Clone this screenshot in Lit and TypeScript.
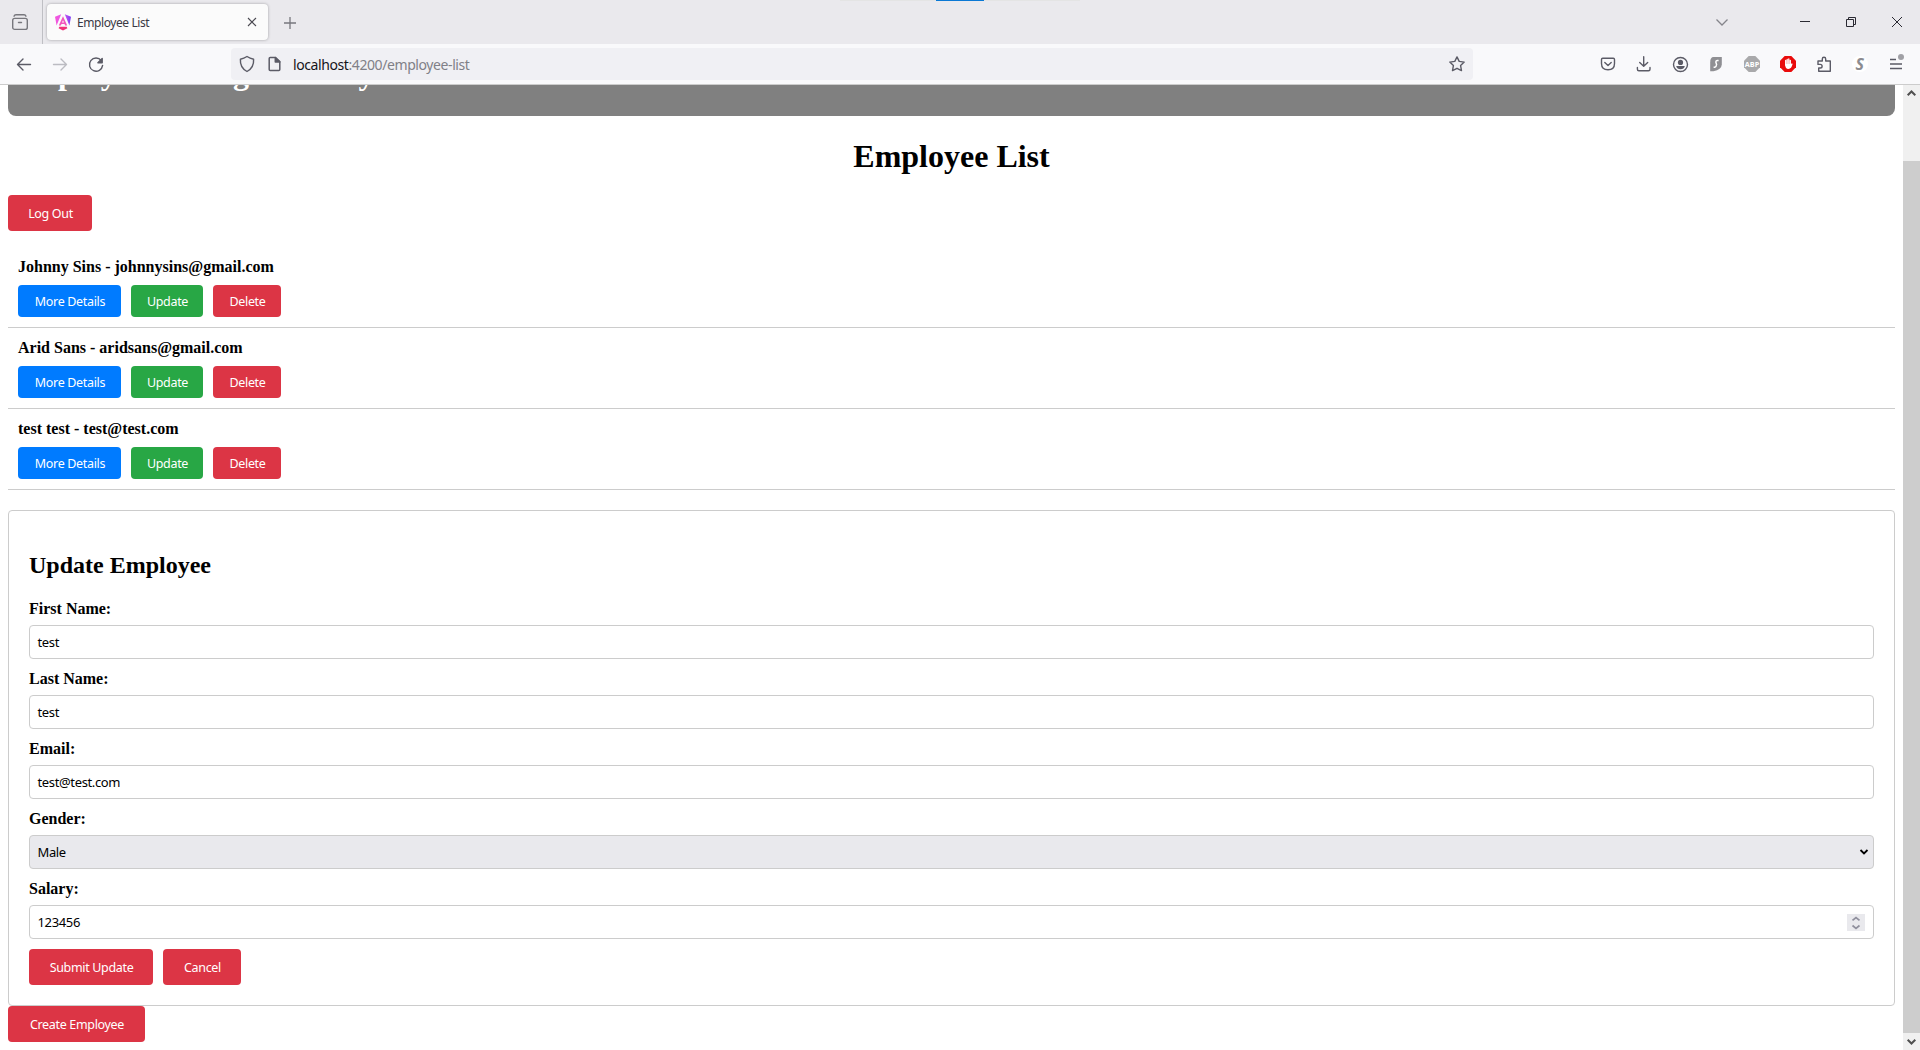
import { LitElement, html, css, svg } from "lit";
import { customElement, property } from "lit/decorators.js";

const base = css`
  * { box-sizing: border-box; }
  svg { display: block; flex: none; overflow: visible; }
`;

@customElement("browser-bar")
export class BrowserBar extends LitElement {
  static styles = [base, css`
    :host { display: block; flex: none; height: 85px; font-family: "Noto Sans", "Open Sans", sans-serif; background: #f9f9fb; border-bottom: 1px solid #cccccc; position: relative; }
    .strip { display: flex; height: 44px; background: #eae9ed; align-items: center; }
    .view { width: 43px; height: 44px; border-right: 1px solid #bfbfc4; display: flex; align-items: center; padding-left: 12px; }
    .tab { margin-left: 4px; width: 221px; height: 36px; background: #fbfbfb; border-radius: 4px; box-shadow: 0 0 3px rgba(0,0,0,.32); display: flex; align-items: center; padding: 0 12px 0 8px; }
    .title { flex: 1; margin-left: 6px; padding-top: 1px; font-size: 12px; color: #3a3944; letter-spacing: -0.42px; white-space: nowrap; }
    .plus { margin-left: 16px; margin-top: 1px; }
    .win { margin-left: auto; display: flex; align-items: center; padding-right: 18px; }
    .min { margin-left: 72px; }
    .gap { margin-left: 36px; }
    .tools { display: flex; height: 40px; align-items: center; }
    .nav { width: 231px; display: flex; gap: 20px; padding-left: 16px; align-items: center; }
    .url { width: 1242px; height: 32px; border-radius: 4px; background: #f0f0f4; display: flex; align-items: center; padding: 0 8px; }
    .addr { margin-left: 10px; padding-top: 1px; flex: 1; display: flex; font-size: 14px; color: #808087; letter-spacing: -0.41px; white-space: nowrap; }
    .host { color: #15141a; }
    .page { margin-left: 12px; }
    .ext { margin-left: auto; display: flex; gap: 20px; padding-right: 16px; }
    .accent { position: absolute; top: 0; left: 936px; width: 48px; height: 1px; background: #0a78d4; }
    .edge { position: absolute; top: 0; left: 840px; width: 240px; height: 1px; background: #e4e4e4; }
    .abp { font: bold 7.5px "Open Sans", sans-serif; fill: #fff; }
    .ess { font: italic bold 16px "Open Sans", sans-serif; fill: #8c8c90; }
  `];

  icon(body: unknown, color = "#5b5b66") {
    return html`<svg width="16" height="16" viewBox="0 0 16 16" fill="none" stroke=${color} stroke-width="1.4" stroke-linecap="round" stroke-linejoin="round">${body}</svg>`;
  }

  render() {
    return html`
      <div class="strip">
        <div class="view">${this.icon(svg`<rect x=".7" y="4.4" width="14.6" height="11" rx="2"/><path d="M2 2.2Q2.5 .8 4 .8H12Q13.5 .8 14 2.2M6.500 8.500H9.500"/>`, "#77777d")}</div>
        <div class="tab">
          <svg width="16" height="17" viewBox="0 0 16 17">
            <defs><linearGradient id="g" x1="0" x2="1"><stop offset="0" stop-color="#f655d8"/><stop offset=".5" stop-color="#e05af0"/><stop offset="1" stop-color="#7a3df5"/></linearGradient></defs>
            <path fill="url(#g)" d="M0 2.800 6.200 .2 1.600 11.500ZM16 2.800 9.800 .2 14.400 11.500Z"/>
            <path fill="#f0307a" d="M4.300 12.700H11.700L12.400 14.200 8 16.600 3.600 14.200Z"/>
            <path fill="#f254bd" fill-rule="evenodd" d="M8 2.300 12.200 11.600H10.200L9.500 10H6.500L5.800 11.600H3.800ZM8 6.200 7 8.500H9Z"/>
          </svg>
          <span class="title">Employee List</span>
          <svg width="8" height="8" viewBox="0 0 8 8" stroke="#4b4a52" stroke-width="1.1"><path d="M0 0 8 8M8 0 0 8"/></svg>
        </div>
        <svg class="plus" width="12" height="12" viewBox="0 0 12 12" stroke="#77777d" stroke-width="1.3"><path d="M6 0V12M0 6H12"/></svg>
        <div class="win">
          <svg width="12" height="7" viewBox="0 0 12 7" fill="none" stroke="#85858b" stroke-width="1.3"><path d="M.5 .5 6 6 11.500 .5"/></svg>
          <svg class="min" width="10" height="10" viewBox="0 0 10 10"><path d="M0 4.500H10" stroke="#2b2a33"/></svg>
          <svg class="gap" width="10" height="10" viewBox="0 0 10 10" fill="none" stroke="#2b2a33"><path d="M.5 2.500H7.500V9.500H.5ZM2.500 2.500V.5H9.500V7.500H7.500"/></svg>
          <svg class="gap" width="10" height="10" viewBox="0 0 10 10" stroke="#2b2a33"><path d="M0 0 10 10M10 0 0 10"/></svg>
        </div>
      </div>
      <div class="tools">
        <div class="nav">
          ${this.icon(svg`<path d="M14.500 8.500H1.500M7 3 1.500 8.500 7 14"/>`)}
          ${this.icon(svg`<path d="M1.500 8.500H14.500M9 3 14.500 8.500 9 14"/>`, "#bcbcc2")}
          ${this.icon(svg`<path d="M13.300 4.600A6.600 6.600 0 1 0 14.600 9.400"/><path d="M14.200 2.400V6.700H9.900Z" fill="#5b5b66"/>`)}
        </div>
        <div class="url">
          ${this.icon(svg`<path d="M8 .5Q11 2.500 14.600 3.200Q15.200 11.500 8 15.500Q.8 11.500 1.400 3.200Q5 2.500 8 .5Z"/>`)}
          <svg class="page" width="16" height="16" viewBox="0 0 16 16" fill="none" stroke="#5b5b66" stroke-width="1.5" stroke-linejoin="round"><path d="M3.200 1.500H8.500L12.800 5.500V13.500Q12.800 14.500 11.800 14.500H3.200Q2.200 14.500 2.200 13.500V2.500Q2.200 1.500 3.200 1.500Z"/><path d="M8.300 1.500V6H12.800Z" fill="#5b5b66"/></svg>
          <div class="addr"><span class="host">localhost</span><span>:4200/employee-list</span></div>
          ${this.icon(svg`<path d="M8 .9 10.200 5.400 15.200 6.100 11.600 9.600 12.500 14.600 8 12.300 3.500 14.600 4.400 9.600 .8 6.100 5.800 5.400Z"/>`)}
        </div>
        <div class="ext">
          ${this.icon(svg`<path d="M2.700 2.200H13.300Q14.500 2.200 14.500 3.500V7.500Q14.500 13.800 8 13.800T1.500 7.500V3.500Q1.500 2.200 2.700 2.200ZM4.800 6.500 8 9.500 11.200 6.500"/>`)}
          ${this.icon(svg`<path d="M7.700 .8V10M3.700 6.500 7.700 10.300 11.700 6.500M1.400 11.500V13.200Q1.400 14.700 2.900 14.700H12.500Q14 14.700 14 13.200V11.500"/>`)}
          ${this.icon(svg`<circle cx="8.500" cy="8.500" r="7"/><circle cx="8.500" cy="6.400" r="2.600" fill="#5b5b66" stroke="none"/><path d="M4.200 10H12.800Q12 13.200 8.500 13.200T4.200 10Z" fill="#5b5b66" stroke="none"/>`)}
          <svg width="16" height="16" viewBox="0 0 16 16"><path d="M5.500 1H13.800V8.500Q13.500 13.500 5.500 15.200H2.200V6.500Q2.200 1 5.500 1Z" fill="#8f8f93"/><path d="M10.600 4.500H9.300Q8 4.500 7.800 6L8.600 8.500Q8.300 11 6.800 11.300H5.600" fill="none" stroke="#fff" stroke-width="1.5"/></svg>
          <svg width="16" height="16" viewBox="0 0 16 16"><path d="M4.700 0H11.300L16 4.700V11.300L11.300 16H4.700L0 11.300V4.700Z" fill="#a9a9ab"/><text class="abp" x=".8" y="10.800" textLength="14.400" lengthAdjust="spacingAndGlyphs">ABP</text></svg>
          <svg width="16" height="16" viewBox="0 0 16 16"><path d="M4.700 0H11.300L16 4.700V11.300L11.300 16H4.700L0 11.300V4.700Z" fill="#e90b0b"/><path d="M5.700 4.500V9M7.200 3.500V9M8.800 3V9M10.300 4.500V9" stroke="#fff" stroke-width="1.3" stroke-linecap="round"/><path d="M5.100 8H10.900L12 7.200 12.600 8Q11.500 12.800 8.500 13Q5 13 5.100 8Z" fill="#fff"/></svg>
          ${this.icon(svg`<path d="M2 6.800V5H6.300V3A1.700 1.700 0 0 1 9.700 3V5H14.300V15.200H2.700V12H4.300A1.800 1.800 0 0 0 4.300 8.400H2Z"/>`)}
          <svg width="16" height="16" viewBox="0 0 16 16"><circle cx="8" cy="8" r="8" fill="#fff"/><text class="ess" x="3.500" y="13.800">S</text></svg>
          <svg width="16" height="16" viewBox="0 0 16 16" stroke="#5b5b66" stroke-width="1.3"><path d="M2 3.500H8M2 8H14M2 12.500H14"/><circle cx="13" cy="1" r="3" fill="#a0a0a5" stroke="none"/></svg>
        </div>
      </div>
      <div class="edge"></div><div class="accent"></div>`;
  }
}

@customElement("ui-button")
export class UiButton extends LitElement {
  @property() kind = "";
  @property({ type: Number }) width = 80;
  static styles = [base, css`
    :host { display: block; flex: none; }
    .btn { display: flex; align-items: center; justify-content: center; height: 36px; border: 0; border-radius: 4px; padding: 0 0 0 1px; background: #dc3545; color: #fff; font: 12.5px "Noto Sans", "Open Sans", sans-serif; letter-spacing: -0.33px; white-space: nowrap; }
    .small { height: 32px; }
    .info { background: #007bff; }
    .ok { background: #28a745; }
  `];
  render() {
    return html`<button class="btn ${this.kind}" style="width:${this.width}px"><slot></slot></button>`;
  }
}

@customElement("app-root")
export class AppRoot extends LitElement {
  static styles = [base, css`
    :host { display: flex; flex-direction: column; width: 1920px; height: 1050px; overflow: hidden; background: #fff; color: #000; font-family: "Liberation Serif", "Times New Roman", serif; }
    .body { flex: 1; display: flex; min-height: 0; overflow: hidden; }
    main { flex: 1; min-width: 0; padding: 0 8px; }
    .head { height: 31px; background: #808080; border-radius: 0 0 8px 8px; overflow: hidden; display: flex; align-items: flex-end; color: #fff; }
    .brand { font-size: 32px; font-weight: bold; line-height: 37px; margin-bottom: 24px; margin-left: 2px; white-space: nowrap; }
    h1 { margin: 22px 0 20px; font-size: 32px; line-height: 37px; text-align: center; }
    .list { margin-top: 16px; }
    .item { height: 81px; padding: 11px 10px 10px; border-bottom: 1px solid #ccc; font-size: 16px; line-height: 18px; font-weight: bold; }
    .row { display: flex; gap: 10px; }
    .item .row { margin-top: 9px; }
    .card { margin-top: 20px; border: 1px solid #ccc; border-radius: 4px; padding: 20px; height: 496px; }
    h2 { margin: 21px 0 20px; font-size: 24px; line-height: 27px; }
    .label { display: block; height: 26px; padding-top: 1px; line-height: 18px; font-size: 16px; font-weight: bold; }
    .field { height: 34px; margin-bottom: 10px; border: 1px solid #ccc; border-radius: 4px; display: flex; align-items: center; justify-content: space-between; padding: 0 8px 0 7.5px; font: 13px "Noto Sans", "Open Sans", sans-serif; letter-spacing: -0.36px; }
    .select { background: #e9e9ed; padding-right: 5px; }
    .spin { width: 18px; height: 17px; background: #e9e9ed; }
    .scroll { width: 17px; background: #f0f0f0; display: flex; flex-direction: column; align-items: center; padding-top: 5px; }
    .thumb { width: 17px; height: 872px; background: #cdcdcd; margin-top: 65px; margin-bottom: 6px; }
  `];

  people = ["Johnny Sins - johnnysins@gmail.com", "Arid Sans - aridsans@gmail.com", "test test - test@test.com"];
  fields = [["First Name:", "test"], ["Last Name:", "test"], ["Email:", "test@test.com"], ["Gender:", "Male"], ["Salary:", "123456"]];

  control(label: string) {
    if (label === "Gender:") return html`<svg width="8" height="6" viewBox="0 0 8 6" fill="none" stroke="#000" stroke-width="1.8"><path d="M.5 1 4 4.500 7.500 1"/></svg>`;
    if (label === "Salary:") return html`<svg class="spin" width="18" height="17" viewBox="0 0 18 17" fill="none" stroke="#8f8f9d" stroke-width="1.7"><path d="M5.500 6.300 9 3.500 12.500 6.300M5.500 11.500 9 14.300 12.500 11.500"/></svg>`;
    return "";
  }

  render() {
    return html`
      <browser-bar></browser-bar>
      <div class="body">
        <main>
          <div class="head"><div class="brand">Employee Management System</div></div>
          <h1>Employee List</h1>
          <ui-button width="84">Log Out</ui-button>
          <div class="list">${this.people.map(p => html`
            <div class="item">${p}
              <div class="row">
                <ui-button kind="small info" width="103">More Details</ui-button>
                <ui-button kind="small ok" width="72">Update</ui-button>
                <ui-button kind="small" width="68">Delete</ui-button>
              </div>
            </div>`)}
          </div>
          <section class="card">
            <h2>Update Employee</h2>
            ${this.fields.map(([label, value]) => html`
              <span class="label">${label}</span>
              <div class="field ${label === "Gender:" ? "select" : ""}"><span>${value}</span>${this.control(label)}</div>`)}
            <div class="row">
              <ui-button width="124">Submit Update</ui-button>
              <ui-button width="78">Cancel</ui-button>
            </div>
          </section>
          <ui-button width="137">Create Employee</ui-button>
        </main>
        <div class="scroll">
          <svg width="9" height="6" viewBox="0 0 9 6" fill="none" stroke="#505050" stroke-width="2"><path d="M.7 5.300 4.500 1.500 8.300 5.300"/></svg>
          <div class="thumb"></div>
          <svg width="9" height="6" viewBox="0 0 9 6" fill="none" stroke="#505050" stroke-width="2"><path d="M.7 .7 4.500 4.500 8.300 .7"/></svg>
        </div>
      </div>`;
  }
}
